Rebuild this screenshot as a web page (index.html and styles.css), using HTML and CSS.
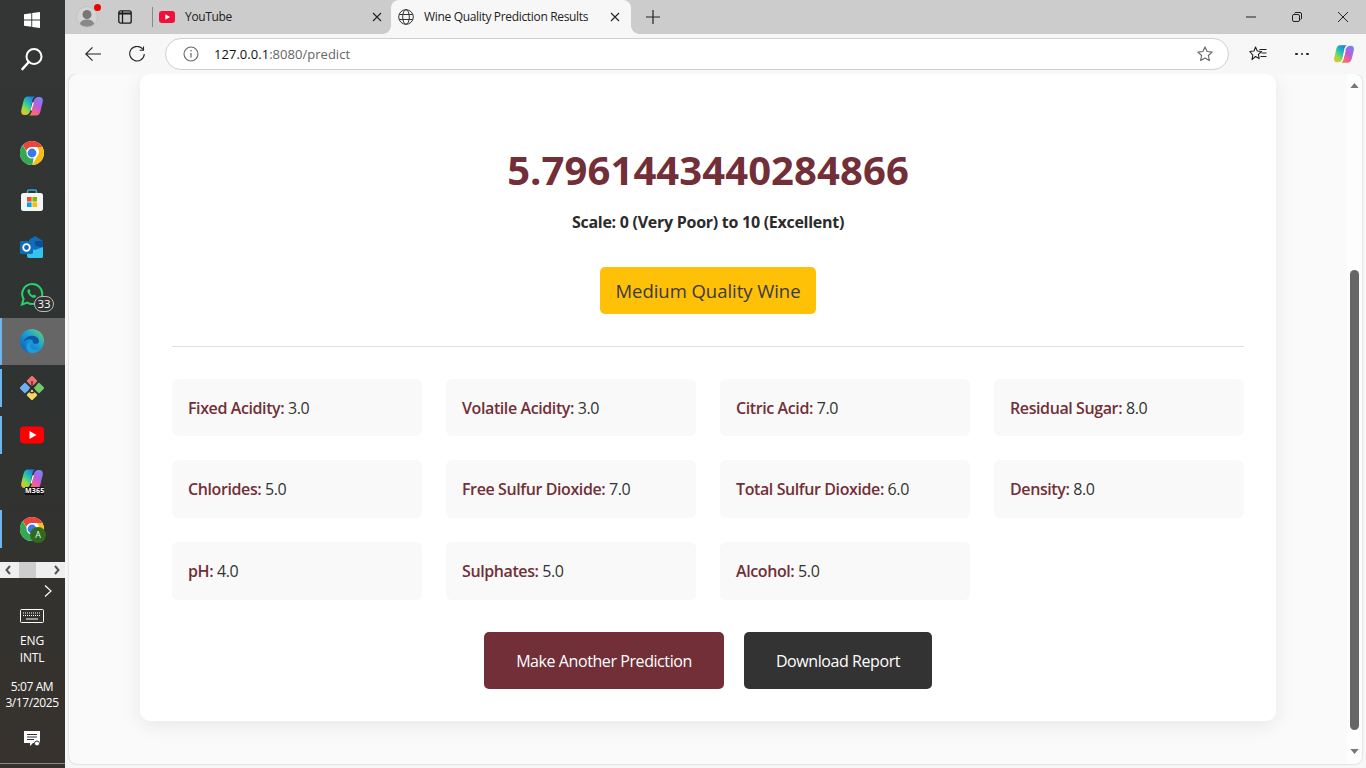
FILE: index.html
```html
<!DOCTYPE html>
<html lang="en">
<head>
<meta charset="utf-8">
<title>Wine Quality Prediction Results</title>
<link rel="stylesheet" href="styles.css">
</head>
<body>
<svg class="defs" width="0" height="0" aria-hidden="true">
  <defs>
    <linearGradient id="cpL" x1="0.8" y1="0" x2="0.1" y2="1"><stop offset="0" stop-color="#1c78e8"/><stop offset="0.4" stop-color="#22c3b0"/><stop offset="0.72" stop-color="#9edb3e"/><stop offset="1" stop-color="#f8b52a"/></linearGradient>
    <linearGradient id="cpR" x1="0.8" y1="0" x2="0.2" y2="1"><stop offset="0" stop-color="#6f8af2"/><stop offset="0.4" stop-color="#b85ce2"/><stop offset="0.75" stop-color="#f0609a"/><stop offset="1" stop-color="#f77b3a"/></linearGradient>
    <linearGradient id="edgeG" x1="0" y1="1" x2="1" y2="0"><stop offset="0" stop-color="#0b57b5"/><stop offset="0.55" stop-color="#1aa0d8"/><stop offset="1" stop-color="#6cd860"/></linearGradient>
    <symbol id="copilot" viewBox="0 0 24 24">
      <path fill="url(#cpL)" d="M7.500 2.500h7.500c-1.500 1-2.300 2.500-2.700 4L10.500 16c-.6 2.500-2 5-5 5H4.500C2 21 .8 19 1.200 16.500L3.500 7C4.200 4 5.500 2.500 7.500 2.500z"/>
      <path fill="url(#cpR)" d="M16.500 21.500H9c1.500-1 2.300-2.500 2.700-4L13.500 8c.6-2.500 2-5 5-5h1c2.500 0 3.700 2 3.300 4.500L20.500 17c-.7 3-2 4.500-4 4.500z"/>
      <path d="M13.200 8.500 11.200 16" stroke="#fff" stroke-width="1.200" stroke-linecap="round"/>
    </symbol>
    <symbol id="chrome" viewBox="0 0 24 24">
      <circle cx="12" cy="12" r="12" fill="#fff"/>
      <path fill="#e8453c" d="M12 0a12 12 0 0 1 10.400 6H12a6 6 0 0 0-5.600 3.800L2.900 4.200A12 12 0 0 1 12 0z"/>
      <path fill="#f9bc15" d="M22.400 6A12 12 0 0 1 12.300 24l4.900-9a6 6 0 0 0-.4-9z"/>
      <path fill="#34a853" d="M2.900 4.200l5 8.800a4.300 4.300 0 0 0 6 3.200l-1.600 7.800A12 12 0 0 1 2.900 4.200z"/>
      <circle cx="12" cy="12" r="5.500" fill="#fff"/>
      <circle cx="12" cy="12" r="4.400" fill="#3b78e7"/>
    </symbol>
  </defs>
</svg>

<div class="screen">
  <aside class="taskbar">
    <div class="tb-start">
      <svg class="ic16" viewBox="0 0 16 16"><path fill="#fff" d="M0 2.300 7.300 1.200V7.500H0zM8.200 1.100 16 0V7.500H8.200zM0 8.400H7.300V14.800L0 13.700zM8.200 8.400H16V16L8.200 14.900z"/></svg>
    </div>
    <div class="tb-search">
      <svg class="ic24" viewBox="0 0 24 24"><circle cx="14" cy="9.500" r="7.500" fill="none" stroke="#fff" stroke-width="2"/><path d="M8.800 15 2.500 22" stroke="#fff" stroke-width="2.600" stroke-linecap="round"/></svg>
    </div>
    <div class="tb-item"><svg class="ic24" viewBox="0 0 24 24"><use href="#copilot"/></svg></div>
    <div class="tb-item"><svg class="ic24" viewBox="0 0 24 24"><use href="#chrome"/></svg></div>
    <div class="tb-item">
      <svg class="ic24" viewBox="0 0 24 24"><path d="M7.500 6V3.500q0-1.500 1.500-1.500h6q1.500 0 1.500 1.500V6" fill="none" stroke="#2fa8e0" stroke-width="1.600"/><rect x="1" y="5" width="22" height="18" rx="2.500" fill="#f5f5f5"/><rect x="7" y="9" width="4.600" height="4.600" fill="#ea4f25"/><rect x="12.400" y="9" width="4.600" height="4.600" fill="#7db900"/><rect x="7" y="14.400" width="4.600" height="4.600" fill="#00a3ee"/><rect x="12.400" y="14.400" width="4.600" height="4.600" fill="#ffb900"/></svg>
    </div>
    <div class="tb-item">
      <svg class="ic24" viewBox="0 0 24 24"><path fill="#0f6cbd" d="M9 5 15 1l8 5v9H9z"/><path fill="#0a4f94" d="M15 6h8v7l-8-3z"/><path fill="#32c3ee" d="M7 12l8 3 8-3v9.500q0 1.500-1.500 1.500H9q-2 0-2-2z"/><rect x="0" y="6" width="13" height="13" rx="1.500" fill="#0f6cbd"/><circle cx="6.500" cy="12.500" r="3.300" fill="none" stroke="#fff" stroke-width="1.800"/></svg>
    </div>
    <div class="tb-item tb-whatsapp">
      <svg class="ic24" viewBox="0 0 24 24"><path d="M2 22.500 3.600 17A10 10 0 1 1 7.200 20.600z" fill="none" stroke="#25d366" stroke-width="2"/><path d="M8 7.500c-1 1-.8 3 1 5.200 1.800 2.200 4 3.600 5.800 3 1.200-.4 1.600-1.500 1.300-2l-2.200-1.200-1 1c-1-.2-2.800-2-3.200-3.200l.8-1L9.500 7.300c-.5-.3-1 0-1.500.2z" fill="#25d366"/></svg>
      <span class="count">33</span>
    </div>
    <div class="tb-item tb-active">
      <svg class="ic24" viewBox="0 0 24 24"><circle cx="12" cy="12" r="12" fill="url(#edgeG)"/><path d="M3.500 13c2-6 9-7.500 13-5 2.500 1.600 3 4 2.200 5.500-1 1.700-4 1.500-5 1-1-.7-.3-2.500-1.800-3.500-3-2-7 .5-8.400 2z" fill="#0c4a9c" opacity=".85"/><path d="M10 23.700c-3.500-1.500-4.500-6-2.800-8.700 1.300-2.200 4-2.700 4.800-2 -2 1.700-2 5 .5 7 2.500 1.800 6.500 1.500 9-1-2 3.600-6.800 6-11.500 4.700z" fill="#1b9de2"/></svg>
    </div>
    <div class="tb-item tb-open">
      <svg class="ic24" viewBox="0 0 24 24"><rect x="8" y="1" width="8" height="8" rx="1.500" transform="rotate(45 12 5)" fill="#ef7070"/><rect x="15" y="8" width="8" height="8" rx="1.500" transform="rotate(45 19 12)" fill="#75c96a"/><rect x="8" y="15" width="8" height="8" rx="1.500" transform="rotate(45 12 19)" fill="#f6d860"/><rect x="1" y="8" width="8" height="8" rx="1.500" transform="rotate(45 5 12)" fill="#6fb1f5"/><circle cx="12" cy="14.500" r="2.300" fill="none" stroke="#2d2d2d" stroke-width="1.300"/><path d="M12 12V5M12 12l4-3" stroke="#2d2d2d" stroke-width="1.300"/></svg>
    </div>
    <div class="tb-item tb-open">
      <svg class="ic24" viewBox="0 0 24 24"><rect y="3.500" width="24" height="17" rx="4" fill="#f00"/><path d="M9.500 8v8l7-4z" fill="#fff"/></svg>
    </div>
    <div class="tb-item tb-m365">
      <svg class="ic-m365" viewBox="0 0 24 24"><use href="#copilot"/></svg>
      <span class="m365">M365</span>
    </div>
    <div class="tb-item tb-open tb-chrome-a">
      <svg class="ic24" viewBox="0 0 24 24"><use href="#chrome"/></svg>
      <span class="avatar-a">A</span>
    </div>

    <div class="tb-scroll">
      <svg class="arrow-sm" viewBox="0 0 6 10"><path d="M5 1 1.500 5 5 9" fill="none" stroke="#555" stroke-width="2"/></svg>
      <span class="tb-thumb"></span>
      <svg class="arrow-sm" viewBox="0 0 6 10"><path d="M1 1 4.500 5 1 9" fill="none" stroke="#555" stroke-width="2"/></svg>
    </div>
    <div class="tb-expand"><svg class="ic-chev" viewBox="0 0 8 12"><path d="M1 .5 7 6 1 11.500" fill="none" stroke="#fff" stroke-width="1.200"/></svg></div>
    <div class="tb-kbd">
      <svg class="ic-kbd" viewBox="0 0 24 14"><rect x=".5" y=".5" width="23" height="13" rx="1" fill="none" stroke="#fff"/><path d="M3 4h18M3 6.500h18" stroke="#fff" stroke-dasharray="1 1"/><path d="M6 10h12" stroke="#fff"/></svg>
    </div>
    <div class="tb-lang">ENG<br>INTL</div>
    <div class="tb-clock">5:07 AM<br>3/17/2025</div>
    <div class="tb-notify">
      <svg class="ic16" viewBox="0 0 16 16"><path fill="#fff" d="M0 0h16v12H9l-3 3v-3H0z"/><path d="M3 3.500h10M3 6h10M3 8.500h7" stroke="#333" stroke-width="1"/><circle cx="13" cy="12.500" r="2.500" fill="#fff" stroke="#333"/></svg>
    </div>
    <div class="tb-foot"></div>
  </aside>

  <div class="browser">
    <header class="tabstrip">
      <div class="profile">
        <svg class="ic22" viewBox="0 0 22 22"><circle cx="11" cy="11" r="10.500" fill="#d4d4d4" stroke="#c2c2c2"/><circle cx="11" cy="8.500" r="4.500" fill="#777"/><path d="M3.800 18c1-3.500 4-4.500 7.200-4.500s6.200 1 7.200 4.500A10.500 10.500 0 0 1 3.800 18z" fill="#888"/></svg>
        <span class="red-dot"></span>
      </div>
      <div class="strip-btn">
        <svg class="ic16" viewBox="0 0 16 16"><rect x="1.800" y="1.800" width="12.400" height="12.400" rx="2" fill="none" stroke="#1a1a1a" stroke-width="1.300"/><path d="M5.500 2v12" stroke="#1a1a1a" stroke-width="1.300"/><path d="M2 4.500h12" stroke="#1a1a1a" stroke-width="2"/></svg>
      </div>
      <span class="strip-sep"></span>
      <div class="tab tab-yt">
        <svg class="fav" viewBox="0 0 16 16"><rect y="2" width="16" height="12" rx="3" fill="#f0103c"/><path d="M6.300 5.300v5.400L11 8z" fill="#fff"/></svg>
        <span class="tab-title">YouTube</span>
        <svg class="tab-x" viewBox="0 0 10 10"><path d="M1 1l8 8M9 1l-8 8" stroke="#222" stroke-width="1.100"/></svg>
      </div>
      <div class="tab tab-on">
        <svg class="fav" viewBox="0 0 16 16"><g fill="none" stroke="#333" stroke-width="1"><circle cx="8" cy="8" r="7.300"/><ellipse cx="8" cy="8" rx="3.300" ry="7.300"/><path d="M1.300 5.500h13.400M1.300 10.500h13.400"/></g></svg>
        <span class="tab-title">Wine Quality Prediction Results</span>
        <svg class="tab-x" viewBox="0 0 10 10"><path d="M1 1l8 8M9 1l-8 8" stroke="#222" stroke-width="1.100"/></svg>
      </div>
      <div class="newtab"><svg class="ic14" viewBox="0 0 14 14"><path d="M7 0v14M0 7h14" stroke="#222" stroke-width="1.200"/></svg></div>
      <div class="winctl">
        <span class="wbtn"><svg class="ic10" viewBox="0 0 10 10"><path d="M0 5h10" stroke="#222"/></svg></span>
        <span class="wbtn"><svg class="ic10" viewBox="0 0 10 10"><rect x=".5" y="2.500" width="7" height="7" rx="1.500" fill="none" stroke="#222"/><path d="M2.500 1.500q.3-1 1.500-1h4q1.500 0 1.500 1.500v4q0 1.200-1 1.500" fill="none" stroke="#222"/></svg></span>
        <span class="wbtn"><svg class="ic10" viewBox="0 0 10 10"><path d="M0 0l10 10M10 0 0 10" stroke="#222"/></svg></span>
      </div>
    </header>

    <nav class="toolbar">
      <span class="tool tool-back"><svg class="ic16" viewBox="0 0 16 16"><path d="M16 8H.8M7.500 1.300.8 8l6.700 6.700" fill="none" stroke="#222" stroke-width="1.100"/></svg></span>
      <span class="tool tool-reload"><svg class="ic16" viewBox="0 0 16 16"><path d="M14 3.500A7.300 7.300 0 1 0 15.300 8" fill="none" stroke="#222" stroke-width="1.100"/><path d="M14.500.5v3.800h-3.800" fill="none" stroke="#222" stroke-width="1.100"/></svg></span>
      <div class="omnibox">
        <svg class="ic16 omni-info" viewBox="0 0 16 16"><circle cx="8" cy="8" r="7" fill="none" stroke="#666" stroke-width="1.100"/><path d="M8 7v4.500" stroke="#666" stroke-width="1.200"/><circle cx="8" cy="4.800" r=".8" fill="#666"/></svg>
        <span class="url"><span class="url-host">127.0.0.1</span>:8080/predict</span>
        <svg class="ic16 omni-star" viewBox="0 0 16 16"><path d="M8 .9l2.100 4.600 5 .6-3.700 3.400 1 5L8 12l-4.400 2.500 1-5L.9 6.100l5-.6z" fill="none" stroke="#666" stroke-width="1.100" stroke-linejoin="round"/></svg>
      </div>
      <span class="tool tool-fav"><svg class="ic18" viewBox="0 0 18 18"><path d="M6.500 2 8.300 6l4.200.5-3.100 2.900.8 4.200-3.700-2.100L3 14.600l.8-4.400L.8 6.500 5 6z" fill="none" stroke="#222" stroke-width="1.100" stroke-linejoin="round"/><path d="M10.500 4.500h7M12.500 8h5M11.500 11.500h6" stroke="#222" stroke-width="1.100"/></svg></span>
      <span class="tool tool-more"><span class="dot"></span><span class="dot"></span><span class="dot"></span></span>
      <span class="tool tool-cp"><svg class="ic22" viewBox="0 0 24 24"><use href="#copilot"/></svg></span>
    </nav>

    <div class="viewport">
      <main class="page">
        <section class="card">
          <h1 class="score">5.7961443440284866</h1>
          <p class="scale">Scale: 0 (Very Poor) to 10 (Excellent)</p>
          <div class="badge-row"><span class="badge">Medium Quality Wine</span></div>
          <hr class="rule">
          <div class="features">
            <div class="feature"><strong>Fixed Acidity:</strong> 3.0</div>
            <div class="feature"><strong>Volatile Acidity:</strong> 3.0</div>
            <div class="feature"><strong>Citric Acid:</strong> 7.0</div>
            <div class="feature"><strong>Residual Sugar:</strong> 8.0</div>
            <div class="feature"><strong>Chlorides:</strong> 5.0</div>
            <div class="feature"><strong>Free Sulfur Dioxide:</strong> 7.0</div>
            <div class="feature"><strong>Total Sulfur Dioxide:</strong> 6.0</div>
            <div class="feature"><strong>Density:</strong> 8.0</div>
            <div class="feature"><strong>pH:</strong> 4.0</div>
            <div class="feature"><strong>Sulphates:</strong> 5.0</div>
            <div class="feature"><strong>Alcohol:</strong> 5.0</div>
          </div>
          <div class="actions">
            <a class="btn btn-wine" href="#">Make Another Prediction</a>
            <a class="btn btn-dark" href="#">Download Report</a>
          </div>
        </section>
      </main>
      <div class="vscroll">
        <svg class="sc-arrow" viewBox="0 0 10 6"><path d="M5 0l5 6H0z" fill="#777"/></svg>
        <div class="sc-track"><span class="sc-thumb"></span></div>
        <svg class="sc-arrow" viewBox="0 0 10 6"><path d="M0 0h10L5 6z" fill="#777"/></svg>
      </div>
    </div>
  </div>
</div>
</body>
</html>
```

FILE: styles.css
```css
* { box-sizing: border-box; }
html, body { margin: 0; padding: 0; height: 100%; overflow: hidden; }
body { font-family: "Open Sans", "Noto Sans", sans-serif; color: #333; }
svg { display: block; flex: none; }
.defs { position: absolute; }
.ic10 { width: 10px; height: 10px; }
.ic14 { width: 14px; height: 14px; }
.ic16 { width: 16px; height: 16px; }
.ic18 { width: 18px; height: 18px; }
.ic22 { width: 22px; height: 22px; }
.ic24 { width: 24px; height: 24px; }

.screen { display: flex; width: 1366px; height: 768px; }

/* taskbar */
.taskbar { width: 65px; flex: none; display: flex; flex-direction: column; background: linear-gradient(180deg, #333634 0%, #2f3331 50%, #37322d 100%); color: #fff; }
.tb-start { height: 40px; display: flex; align-items: center; justify-content: center; padding-right: 1px; }
.tb-search { height: 43px; display: flex; align-items: center; justify-content: center; padding: 0 1px 5px 0; }
.tb-item { height: 47px; display: flex; align-items: center; justify-content: center; position: relative; padding: 0 1px 2px 0; }
.tb-active { background: #666; box-shadow: inset 2px 0 0 #6db5ee; }
.tb-open::before { content: ""; position: absolute; left: 0; top: 4px; bottom: 5px; width: 2px; background: #6db5ee; }
.count { position: absolute; left: 34px; top: 25px; width: 20px; height: 16px; border-radius: 8px; border: 1px solid #bbb; background: #333; color: #fff; font-size: 11.500px; line-height: 14px; text-align: center; }
.ic-m365 { width: 24px; height: 24px; margin-top: -6px; }
.m365 { position: absolute; left: 25px; top: 28px; width: 19px; height: 8px; background: #111; color: #fff; font-size: 7px; font-weight: 700; line-height: 8px; text-align: center; letter-spacing: .2px; }
.avatar-a { position: absolute; left: 30px; top: 21px; width: 16px; height: 16px; border-radius: 50%; background: #2f6a1e; color: #dfe; font-size: 9px; line-height: 16px; text-align: center; }
.tb-scroll { margin-top: 9px; height: 16px; background: #efefef; display: flex; align-items: center; justify-content: space-between; padding: 0 5px; }
.arrow-sm { width: 6px; height: 10px; }
.tb-thumb { width: 17px; height: 16px; background: #cdcdcd; margin-left: -1px; margin-right: 9px; }
.tb-expand { height: 25px; display: flex; align-items: center; justify-content: flex-end; padding-right: 13px; }
.ic-chev { width: 8px; height: 12px; }
.tb-kbd { height: 26px; display: flex; align-items: center; justify-content: center; padding-right: 1px; }
.ic-kbd { width: 24px; height: 14px; }
.tb-lang { font-size: 12px; line-height: 17px; text-align: center; height: 36px; margin-top: 3px; padding-right: 1px; letter-spacing: -.2px; }
.tb-clock { font-size: 12px; line-height: 16px; text-align: center; margin-top: 11px; white-space: nowrap; letter-spacing: -.4px; padding-right: 1px; }
.tb-notify { margin-top: 20px; height: 18px; display: flex; justify-content: center; padding-right: 1px; }
.tb-foot { margin-top: auto; height: 1px; background: #888; margin-bottom: 4px; }

/* browser */
.browser { flex: 1; min-width: 0; display: flex; flex-direction: column; background: #f7f7f7; }
.tabstrip { height: 34px; flex: none; background: #ccc; display: flex; align-items: center; padding-left: 11px; }
.profile { width: 22px; height: 22px; position: relative; }
.red-dot { position: absolute; right: -3px; top: -2px; width: 7px; height: 7px; border-radius: 50%; background: #e00; }
.strip-btn { margin-left: 19px; width: 16px; }
.strip-sep { width: 1px; height: 20px; background: #888; margin-left: 19px; }
.tab { height: 34px; display: flex; align-items: center; position: relative; font-size: 12px; color: #222; }
.tab-yt { width: 238px; padding-left: 6px; }
.fav { width: 16px; height: 16px; }
.tab-title { margin-left: 10px; margin-top: -1px; white-space: nowrap; letter-spacing: -.33px; }
.tab-x { width: 10px; height: 10px; margin-left: auto; }
.tab-yt .tab-x { margin-right: 9px; }
.tab-on { width: 240px; background: #f7f7f7; border-radius: 8px 8px 0 0; padding-left: 7px; padding-right: 11px; }
.tab-on::before, .tab-on::after { content: ""; position: absolute; bottom: 0; width: 8px; height: 8px; }
.tab-on::before { left: -8px; background: radial-gradient(circle at 0 0, #ccc 7.500px, #f7f7f7 8px); }
.tab-on::after { right: -8px; background: radial-gradient(circle at 100% 0, #ccc 7.500px, #f7f7f7 8px); }
.newtab { margin-left: 15px; }
.winctl { margin-left: auto; display: flex; }
.wbtn { width: 46px; height: 34px; display: flex; align-items: center; justify-content: center; }

.toolbar { height: 40px; flex: none; display: flex; align-items: center; background: #f7f7f7; position: relative; }
.tool { display: flex; align-items: center; justify-content: center; flex: none; }
.tool-back { margin-left: 20px; width: 16px; }
.tool-reload { margin-left: 28px; width: 16px; }
.omnibox { flex: none; margin-left: 20px; width: 1064px; height: 32px; margin-top: -1px; background: #fff; border: 1px solid #d0d0d0; border-radius: 16px; display: flex; align-items: center; padding: 0 15px 0 17px; }
.url { margin-left: 15px; font-size: 13px; color: #666; letter-spacing: .03px; white-space: nowrap; }
.url-host { color: #111; }
.omni-star { margin-left: auto; }
.tool-fav { margin-left: 20px; width: 18px; }
.tool-more { margin-left: 27px; width: 16px; gap: 3px; }
.dot { width: 2.500px; height: 2.500px; background: #222; border-radius: 50%; }
.tool-cp { margin-left: 23px; width: 22px; }

/* page */
.viewport { flex: 1; min-height: 0; display: flex; margin: 0 4px 4px 4px; background: #fafafa; border-radius: 8px; overflow: hidden; box-shadow: 0 0 2px rgba(0,0,0,.25); }
.page { flex: 1; min-width: 0; display: flex; justify-content: center; align-items: flex-start; }
.card { width: 1136px; background: #fff; border-radius: 10px; padding: 68px 32px 32px; box-shadow: 0 4px 20px rgba(0,0,0,.08); }
.score { margin: 0; font-size: 40px; line-height: 56px; font-weight: 700; color: #722f37; text-align: center; letter-spacing: .08px; }
.scale { margin: 12px 0 0; font-size: 16px; line-height: 24px; font-weight: 700; color: #2b2b2b; text-align: center; letter-spacing: -.27px; }
.badge-row { margin-top: 33px; display: flex; justify-content: center; }
.badge { width: 216px; height: 47px; background: #ffc107; border-radius: 5px; color: #3a3a3a; font-size: 18.500px; line-height: 47px; text-align: center; white-space: nowrap; letter-spacing: -.04px; }
.rule { margin: 32px 0 31.880px; border: 0; border-top: 1px solid #e0e0e0; height: 0; }
.features { display: grid; grid-template-columns: repeat(4, 1fr); gap: 24px; }
.feature { height: 57.600px; background: #f9f9f9; border-radius: 6px; padding: 0 16px; font-size: 16px; line-height: 58.500px; color: #333; white-space: nowrap; letter-spacing: -.4px; }
.feature strong { color: #722f37; font-weight: 600; }
.actions { margin-top: 32.320px; display: flex; justify-content: center; gap: 20px; }
.btn { height: 57px; border-radius: 5px; padding-top: 1px; color: #fff; font-size: 16px; line-height: 57px; text-align: center; text-decoration: none; white-space: nowrap; letter-spacing: -.42px; }
.btn-wine { width: 240px; background: #722f37; }
.btn-dark { width: 188px; background: #333; }

.vscroll { width: 15px; flex: none; display: flex; flex-direction: column; align-items: center; background: #fdfdfd; padding: 9px 0 10px; }
.sc-arrow { width: 9px; height: 5px; flex: none; }
.sc-track { flex: 1; width: 100%; padding: 182px 0 19px; display: flex; justify-content: center; }
.sc-thumb { width: 9px; height: 100%; background: #666; border-radius: 5px; }
```
